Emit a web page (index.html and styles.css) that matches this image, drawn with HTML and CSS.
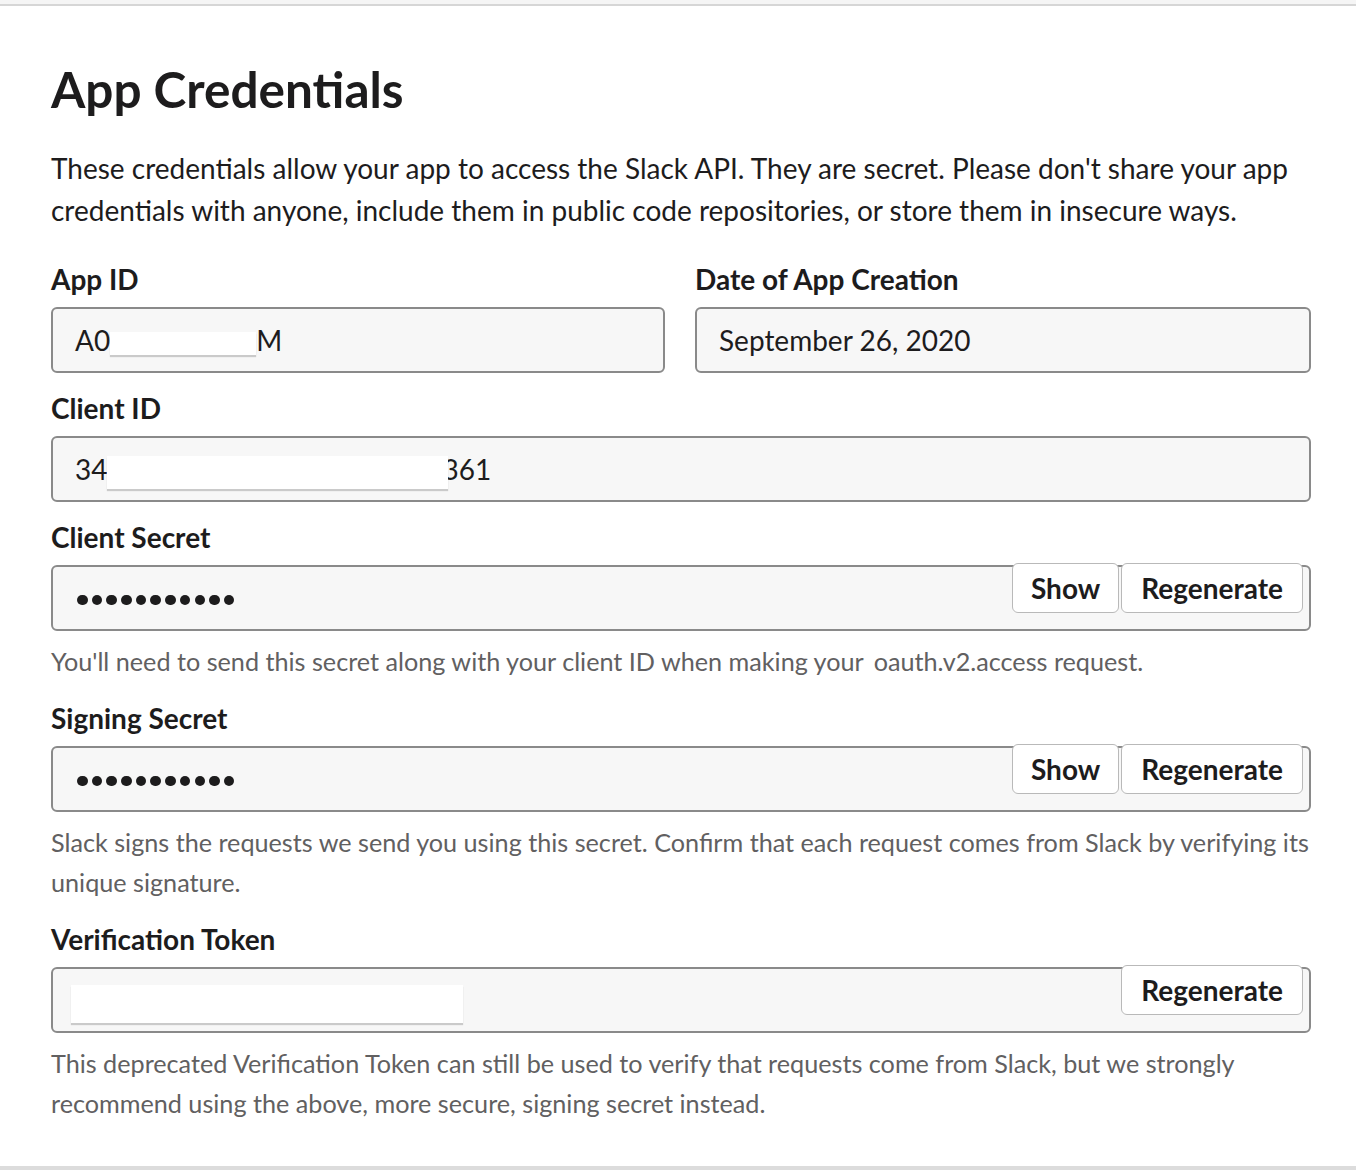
FILE: index.html
```html
<!DOCTYPE html>
<html lang="en">
<head>
<meta charset="utf-8">
<title>App Credentials</title>
<link rel="stylesheet" href="styles.css">
</head>
<body>
<div class="topbar"></div>
<main class="panel">
  <h1 class="title">App Credentials</h1>
  <p class="desc">These credentials allow your app to access the Slack API. They are secret. Please don't share your app credentials with anyone, include them in public code repositories, or store them in insecure ways.</p>

  <div class="row">
    <div class="field">
      <div class="label">App ID</div>
      <div class="input">A0<span class="redact redact-id"></span>M</div>
    </div>
    <div class="field">
      <div class="label">Date of App Creation</div>
      <div class="input">September 26, 2020</div>
    </div>
  </div>

  <div class="field">
    <div class="label">Client ID</div>
    <div class="input">34<span class="redact redact-client"></span>361</div>
  </div>

  <div class="field field-help">
    <div class="label">Client Secret</div>
    <div class="input">
      <span class="dots"><i></i><i></i><i></i><i></i><i></i><i></i><i></i><i></i><i></i><i></i><i></i></span>
      <div class="actions"><button class="btn btn-show">Show</button><button class="btn">Regenerate</button></div>
    </div>
    <p class="help">You'll need to send this secret along with your client ID when making your <span class="code">oauth.v2.access</span> request.</p>
  </div>

  <div class="field field-help">
    <div class="label">Signing Secret</div>
    <div class="input">
      <span class="dots"><i></i><i></i><i></i><i></i><i></i><i></i><i></i><i></i><i></i><i></i><i></i></span>
      <div class="actions"><button class="btn btn-show">Show</button><button class="btn">Regenerate</button></div>
    </div>
    <p class="help">Slack signs the requests we send you using this secret. Confirm that each request comes from Slack by verifying its unique signature.</p>
  </div>

  <div class="field field-help">
    <div class="label">Verification Token</div>
    <div class="input input-token">
      <span class="redact redact-token"></span>
      <div class="actions"><button class="btn">Regenerate</button></div>
    </div>
    <p class="help">This deprecated Verification Token can still be used to verify that requests come from Slack, but we strongly recommend using the above, more secure, signing secret instead.</p>
  </div>
</main>
<div class="bottombar"></div>
</body>
</html>
```

FILE: styles.css
```css
* { box-sizing: border-box; }
html, body { margin: 0; padding: 0; background: #fff; }
body {
  font-family: Lato, "Open Sans", "Liberation Sans", sans-serif;
  color: #1d1c1d;
  width: 1356px;
  height: 1170px;
  position: relative;
  overflow: hidden;
}
.topbar {
  height: 6px;
  background: #f5f5f5;
  border-bottom: 2px solid #d6d6d6;
}
.panel {
  padding: 0 45px 0 51px;
  width: 1356px;
}
.title {
  margin: 54px 0 29px;
  font-size: 49.5px;
  line-height: 58px;
  font-weight: 700;
}
.desc {
  margin: 0 0 30px;
  font-size: 28px;
  line-height: 42px;
  font-weight: 400;
}
.row {
  display: grid;
  grid-template-columns: 614px 616px;
  column-gap: 30px;
}
.field { margin-bottom: 17px; }
.field-help { margin-bottom: 19px; }
.label {
  font-size: 28px;
  font-weight: 700;
  line-height: 36px;
  margin-bottom: 10px;
}
.input {
  position: relative;
  height: 66px;
  border: 2px solid #8a8a8a;
  border-radius: 6px;
  background: #f7f7f7;
  padding: 0 22px;
  display: flex;
  align-items: center;
  font-size: 28px;
  line-height: 1;
  white-space: nowrap;
}
.redact {
  display: inline-block;
  background: #fff;
  box-shadow: 0 2px 1px rgba(0,0,0,0.18);
}
.redact-id { width: 146px; height: 23px; margin-top: 6px; }
.redact-client { width: 341px; height: 33px; margin-top: 6px; margin-right: -6px; position: relative; }
.input-token { padding-left: 18px; }
.redact-token { width: 392px; height: 38px; margin-top: 8px; }
.dots {
  display: flex;
  gap: 4.2px;
  margin-left: 2px;
  margin-top: 4px;
}
.dots i {
  display: block;
  width: 10.5px;
  height: 10.5px;
  border-radius: 50%;
  background: #1d1c1d;
}
.actions {
  position: absolute;
  top: -4px;
  right: 6px;
  display: flex;
  gap: 2px;
}
.btn {
  font-family: inherit;
  font-size: 28px;
  font-weight: 700;
  color: #1d1c1d;
  background: #fff;
  border: 1px solid #b9b9b9;
  border-radius: 6px;
  height: 50px;
  padding: 0 19px;
  line-height: 1;
  cursor: pointer;
}
.btn-show { padding: 0 18px; }
.help {
  margin: 10px 0 0;
  font-size: 25.2px;
  line-height: 40px;
  color: #616061;
}
.code { padding-left: 4px; }
.bottombar {
  position: absolute;
  left: 0;
  right: 0;
  bottom: 0;
  height: 4px;
  background: #dcdcdc;
}
```
